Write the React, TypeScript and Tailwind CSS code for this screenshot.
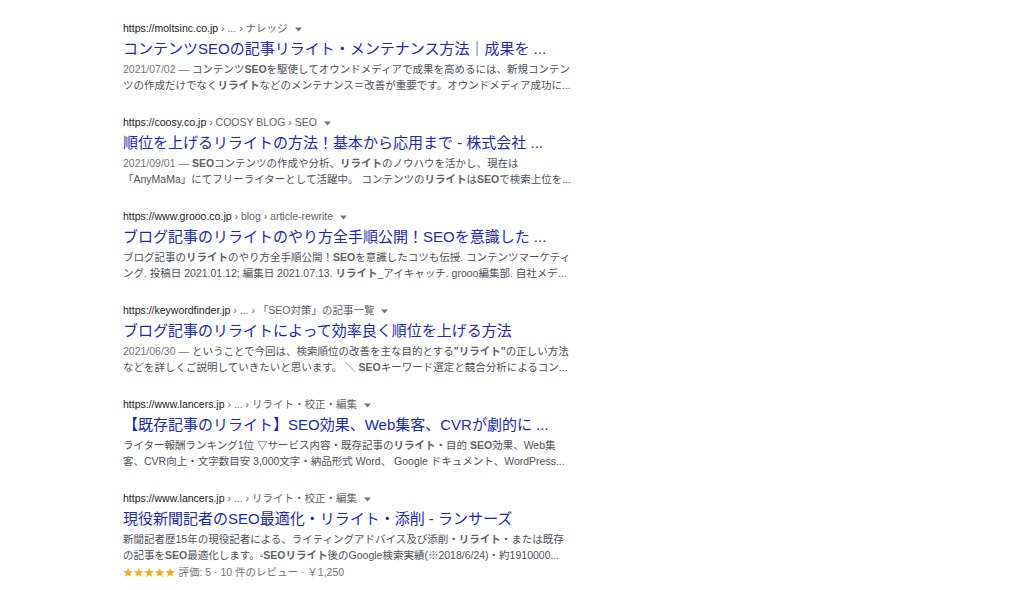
import React from "react";

type Seg = { t: string; b?: boolean; d?: boolean };

type Result = {
  host: string;
  crumbs: string;
  title: string;
  lines: Seg[][];
  rating?: boolean;
};

const results: Result[] = [
  {
    host: "https://moltsinc.co.jp",
    crumbs: "\u00a0› ... › ナレッジ",
    title: "コンテンツSEOの記事リライト・メンテナンス方法｜成果を ...",
    lines: [
      [
        { t: "2021/07/02 — ", d: true },
        { t: "コンテンツ" },
        { t: "SEO", b: true },
        { t: "を駆使してオウンドメディアで成果を高めるには、新規コンテン" },
      ],
      [
        { t: "ツの作成だけでなく" },
        { t: "リライト", b: true },
        { t: "などのメンテナンス＝改善が重要です。オウンドメディア成功に..." },
      ],
    ],
  },
  {
    host: "https://coosy.co.jp",
    crumbs: "\u00a0› COOSY BLOG › SEO",
    title: "順位を上げるリライトの方法！基本から応用まで - 株式会社 ...",
    lines: [
      [
        { t: "2021/09/01 — ", d: true },
        { t: "SEO", b: true },
        { t: "コンテンツの作成や分析、" },
        { t: "リライト", b: true },
        { t: "のノウハウを活かし、現在は" },
      ],
      [
        { t: "「AnyMaMa」にてフリーライターとして活躍中。 コンテンツの" },
        { t: "リライト", b: true },
        { t: "は" },
        { t: "SEO", b: true },
        { t: "で検索上位を..." },
      ],
    ],
  },
  {
    host: "https://www.grooo.co.jp",
    crumbs: "\u00a0› blog › article-rewrite",
    title: "ブログ記事のリライトのやり方全手順公開！SEOを意識した ...",
    lines: [
      [
        { t: "ブログ記事の" },
        { t: "リライト", b: true },
        { t: "のやり方全手順公開！" },
        { t: "SEO", b: true },
        { t: "を意識したコツも伝授. コンテンツマーケティ" },
      ],
      [
        { t: "ング. 投稿日 2021.01.12; 編集日 2021.07.13. " },
        { t: "リライト", b: true },
        { t: "_アイキャッチ. grooo編集部. 自社メデ..." },
      ],
    ],
  },
  {
    host: "https://keywordfinder.jp",
    crumbs: "\u00a0› ... › 「SEO対策」の記事一覧",
    title: "ブログ記事のリライトによって効率良く順位を上げる方法",
    lines: [
      [
        { t: "2021/06/30 — ", d: true },
        { t: "ということで今回は、検索順位の改善を主な目的とする" },
        { t: "\"リライト\"", b: true },
        { t: "の正しい方法" },
      ],
      [
        { t: "などを詳しくご説明していきたいと思います。 ＼ " },
        { t: "SEO", b: true },
        { t: "キーワード選定と競合分析によるコン..." },
      ],
    ],
  },
  {
    host: "https://www.lancers.jp",
    crumbs: "\u00a0› ... › リライト・校正・編集",
    title: "【既存記事のリライト】SEO効果、Web集客、CVRが劇的に ...",
    lines: [
      [
        { t: "ライター報酬ランキング1位 ▽サービス内容・既存記事の" },
        { t: "リライト", b: true },
        { t: "・目的 " },
        { t: "SEO", b: true },
        { t: "効果、Web集" },
      ],
      [
        { t: "客、CVR向上・文字数目安 3,000文字・納品形式 Word、 Google ドキュメント、WordPress..." },
      ],
    ],
  },
  {
    host: "https://www.lancers.jp",
    crumbs: "\u00a0› ... › リライト・校正・編集",
    title: "現役新聞記者のSEO最適化・リライト・添削 - ランサーズ",
    lines: [
      [
        { t: "新聞記者歴15年の現役記者による、ライティングアドバイス及び添削・" },
        { t: "リライト", b: true },
        { t: "・または既存" },
      ],
      [
        { t: "の記事を" },
        { t: "SEO", b: true },
        { t: "最適化します。▫" },
        { t: "SEOリライト", b: true },
        { t: "後のGoogle検索実績(※2018/6/24)・約1910000..." },
      ],
    ],
    rating: true,
  },
];

const font = {
  fontFamily: '"Liberation Sans", Arial, "Noto Sans CJK JP", sans-serif',
};

function Caret() {
  return (
    <svg
      width="7"
      height="5"
      viewBox="0 0 7 5"
      className="ml-[7px] inline-block align-middle"
    >
      <polygon points="0,0.5 7,0.5 3.5,4.5" fill="#70757a" />
    </svg>
  );
}

function ResultBlock({ r }: { r: Result }) {
  return (
    <div className="mb-[21.5px]">
      <div className="whitespace-nowrap text-[10.5px] leading-[14px]">
        <span className="text-[#202124]">{r.host}</span>
        <span className="text-[#5f6368]">{r.crumbs}</span>
        <Caret />
      </div>
      <div className="mb-[2px] pt-[4px] whitespace-nowrap text-[15px] leading-[19.5px] text-[#1c28b8]">
        {r.title}
      </div>
      <div className="text-[10.5px] leading-[16.5px] text-[#4d5156]">
        {r.lines.map((line, i) => (
          <div key={i} className="whitespace-nowrap">
            {line.map((s, j) => (
              <span
                key={j}
                className={
                  s.b
                    ? "font-bold text-[#5f6368]"
                    : s.d
                    ? "text-[#70757a]"
                    : ""
                }
              >
                {s.t}
              </span>
            ))}
          </div>
        ))}
        {r.rating && (
          <div className="whitespace-nowrap text-[#70757a]">
            <span className="text-[#f7a922]">★★★★★</span>
            <span> 評価: 5 · 10 件のレビュー · ￥1,250</span>
          </div>
        )}
      </div>
    </div>
  );
}

export default function App() {
  return (
    <div className="h-[590px] w-[1024px] overflow-hidden bg-white" style={font}>
      <div className="pl-[123px] pt-[21px]">
        {results.map((r, i) => (
          <ResultBlock key={i} r={r} />
        ))}
      </div>
    </div>
  );
}
